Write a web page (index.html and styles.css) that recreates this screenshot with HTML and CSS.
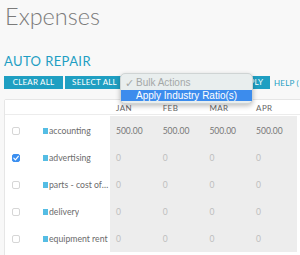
FILE: index.html
```html
<!DOCTYPE html>
<html>
<head>
<meta charset="utf-8">
<link rel="stylesheet" href="styles.css">
</head>
<body>
<div class="page">
  <h1 class="title">Expenses</h1>
  <h2 class="section">AUTO REPAIR</h2>
  <div class="toolbar">
    <button class="btn btn-clear">CLEAR ALL</button>
    <button class="btn btn-select">SELECT ALL</button>
    <div class="select-box"></div>
    <button class="btn btn-apply">APPLY</button>
    <span class="help">HELP (</span>
  </div>
  <div class="menu">
    <div class="menu-item muted"><span class="check">✓</span>Bulk Actions</div>
    <div class="menu-item active">Apply Industry Ratio(s)</div>
  </div>
  <div class="card">
    <div class="row head">
      <div class="name-cell"></div>
      <div class="month">JAN</div>
      <div class="month">FEB</div>
      <div class="month">MAR</div>
      <div class="month">APR</div>
      <div class="month tail"></div>
    </div>
    <div class="body">
      <div class="row">
        <div class="name-cell"><span class="cb"></span><span class="tag"></span><span class="label">accounting</span></div>
        <div class="val">500.00</div><div class="val">500.00</div><div class="val">500.00</div><div class="val">500.00</div><div class="tail"></div>
      </div>
      <div class="row">
        <div class="name-cell"><span class="cb checked"><svg viewBox="0 0 8 8" width="8" height="8"><path d="M1.8 4.2 L3.4 5.8 L6.3 2.3" fill="none" stroke="#fff" stroke-width="1.2" stroke-linecap="round" stroke-linejoin="round"/></svg></span><span class="tag"></span><span class="label">advertising</span></div>
        <div class="val zero">0</div><div class="val zero">0</div><div class="val zero">0</div><div class="val zero">0</div><div class="tail"></div>
      </div>
      <div class="row">
        <div class="name-cell"><span class="cb"></span><span class="tag"></span><span class="label">parts - cost of goods sold</span></div>
        <div class="val zero">0</div><div class="val zero">0</div><div class="val zero">0</div><div class="val zero">0</div><div class="tail"></div>
      </div>
      <div class="row">
        <div class="name-cell"><span class="cb"></span><span class="tag"></span><span class="label">delivery</span></div>
        <div class="val zero">0</div><div class="val zero">0</div><div class="val zero">0</div><div class="val zero">0</div><div class="tail"></div>
      </div>
      <div class="row">
        <div class="name-cell"><span class="cb"></span><span class="tag"></span><span class="label">equipment rent</span></div>
        <div class="val zero">0</div><div class="val zero">0</div><div class="val zero">0</div><div class="val zero">0</div><div class="tail"></div>
      </div>
    </div>
  </div>
</div>
</body>
</html>
```
FILE: styles.css
```css
html, body {
  margin: 0;
  padding: 0;
  background: #f8f8f8;
  overflow: hidden;
}
body {
  font-family: Lato, "Open Sans", sans-serif;
}
.page {
  position: relative;
  padding: 0 0 0 4px;
  width: 296px;
  height: 255px;
  overflow: hidden;
}
.title {
  margin: 2px 0 0 1px;
  font-size: 23.5px;
  line-height: 28px;
  font-weight: 300;
  color: #7b7b7b;
}
.section {
  margin: 23px 0 0 0;
  font-size: 13px;
  line-height: 16px;
  font-weight: 400;
  color: #1e9ec3;
  letter-spacing: 0.4px;
}
.toolbar {
  display: flex;
  align-items: center;
  gap: 2px;
  margin-top: 7px;
  height: 13px;
}
.btn {
  height: 13px;
  border: 0;
  padding: 0;
  background: #1f9fc2;
  color: #fff;
  font-family: Lato, sans-serif;
  font-size: 8px;
  letter-spacing: 0.2px;
  line-height: 13px;
  text-align: center;
  flex: none;
}
.btn-clear { width: 59px; }
.btn-select { width: 59px; }
.select-box {
  width: 104px;
  height: 13px;
  background: #fff;
  flex: none;
}
.btn-apply { width: 38px; }
.help {
  margin-left: 2px;
  color: #1e9ec3;
  font-size: 8px;
  letter-spacing: 0.2px;
  white-space: nowrap;
}
.menu {
  position: absolute;
  left: 120px;
  top: 73px;
  width: 133px;
  padding: 3px 0 2px;
  box-sizing: border-box;
  background: #e9eeee;
  border: 1px solid #cfd4d4;
  border-radius: 5px;
  box-shadow: 0 2px 5px rgba(0, 0, 0, 0.25);
  font-family: "Liberation Sans", Arial, sans-serif;
  font-size: 10px;
  z-index: 5;
}
.menu-item {
  height: 11px;
  line-height: 11px;
  padding-left: 15px;
  position: relative;
}
.menu-item.muted {
  color: #a4a8a8;
  height: 12.5px;
  line-height: 12px;
}
.check {
  position: absolute;
  left: 4px;
  color: #a4a8a8;
  font-size: 11px;
}
.menu-item.active {
  background: #3c8ced;
  color: #fff;
}
.card {
  margin-top: 10px;
  background: #fff;
  border: 1px solid #e6e6e6;
  border-radius: 2px;
  width: 360px;
  height: 200px;
  box-sizing: border-box;
}
.row {
  display: flex;
  height: 27px;
  align-items: center;
}
.row.head {
  height: 14px;
  border-bottom: 1px solid #ececec;
  margin-bottom: 1px;
}
.name-cell {
  width: 105px;
  flex: none;
  display: flex;
  align-items: center;
  height: 100%;
  background: #fff;
  overflow: hidden;
}
.month, .val {
  width: 46.7px;
  flex: none;
  box-sizing: border-box;
  padding-left: 6px;
  height: 100%;
  display: flex;
  align-items: center;
}
.month {
  font-size: 8px;
  color: #666;
  letter-spacing: 0.4px;
  padding-top: 1px;
}
.body {
  background: linear-gradient(to right, #fff 0 105px, #ededed 105px 291.8px, #fff 291.8px);
  padding-top: 1px;
}
.val {
  font-size: 8.5px;
  color: #777;
}
.val.zero {
  color: #bdbdbd;
}
.tail {
  flex: 1;
  height: 100%;
}
.cb {
  width: 8px;
  height: 8px;
  margin-left: 7px;
  border: 1px solid #d6d6d6;
  box-sizing: border-box;
  border-radius: 2px;
  background: #fff;
  flex: none;
  display: flex;
}
.cb.checked {
  background: #3b8ff0;
  border-color: #3b8ff0;
}
.cb svg {
  margin: -1px;
}
.tag {
  width: 4.5px;
  height: 6px;
  background: #55bde4;
  margin-left: 23px;
  flex: none;
}
.label {
  margin-left: 1.5px;
  font-size: 8.7px;
  color: #6b6b6b;
  white-space: nowrap;
  overflow: hidden;
  text-overflow: ellipsis;
  max-width: 60px;
}
```
